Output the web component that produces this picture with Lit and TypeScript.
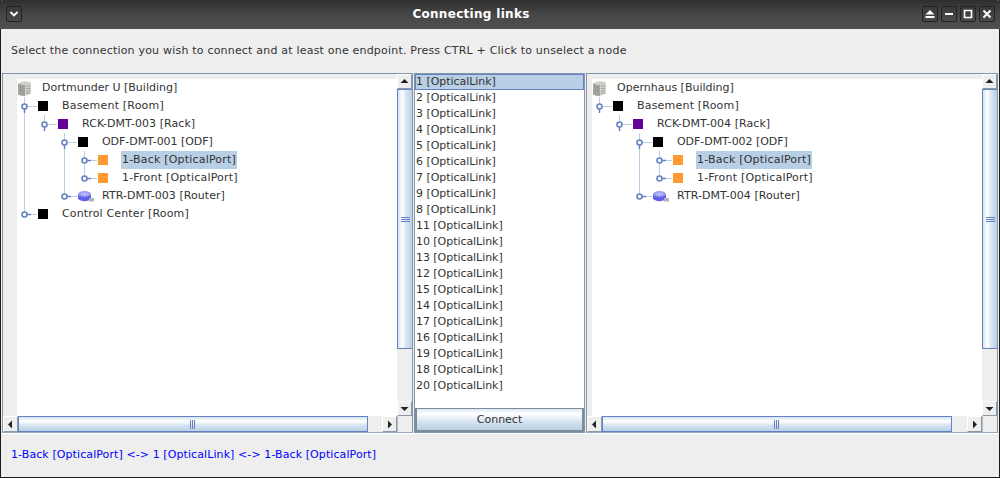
import { LitElement, html, css, svg } from 'lit';
import { customElement, property } from 'lit/decorators.js';

type Kind = 'building' | 'black' | 'rack' | 'port' | 'router';
interface TreeRow {
  label: string;
  kind: Kind;
  depth: number;
  guides: number[]; // columns with a line running the full row
  ends: boolean; // handle's line stops here (last child)
  open?: boolean;
  selected?: boolean;
  track?: number; // the reference text has rounded advances, so widths differ a bit per label
}

const treeRows = (a: string, b: string, c: string, d: string, e: string, withControl: boolean): TreeRow[] => {
  const rows: TreeRow[] = [
    { label: a, kind: 'building', depth: 0, guides: [], ends: false },
    { label: 'Basement [Room]', kind: 'black', depth: 1, guides: [], ends: !withControl, open: true, track: 0.2 },
    { label: b, kind: 'rack', depth: 2, guides: withControl ? [0] : [], ends: true, open: true, track: 0.06 },
    { label: c, kind: 'black', depth: 3, guides: withControl ? [0] : [], ends: false, open: true, track: -0.05 },
    { label: '1-Back [OpticalPort]', kind: 'port', depth: 4, guides: withControl ? [0, 2] : [2], ends: false, selected: true, track: 0.2 },
    { label: '1-Front [OpticalPort]', kind: 'port', depth: 4, guides: withControl ? [0, 2] : [2], ends: true, track: 0.2 },
    { label: d, kind: 'router', depth: 3, guides: withControl ? [0] : [], ends: true, track: 0.05 },
  ];
  if (withControl) rows.push({ label: e, kind: 'black', depth: 1, guides: [], ends: true, track: 0.15 });
  return rows;
};

@customElement('scroll-bar')
export class ScrollBar extends LitElement {
  @property({ type: Boolean, reflect: true }) horizontal = false;
  @property({ type: Number }) size = 260;

  static styles = css`
    :host { display: flex; flex-direction: column; background: #eeeeee; min-width: 0; min-height: 0; }
    :host([horizontal]) { flex-direction: row; }
    .btn {
      flex: 0 0 15px;
      height: 15px;
      box-sizing: border-box;
      display: flex;
      align-items: center;
      justify-content: center;
      background: #eeeeee;
      border: 1px solid #a3b1bf;
      border-color: #ffffff #8a99a8 #8a99a8 #ffffff;
    }
    :host([horizontal]) .btn { height: auto; }
    .thumb {
      flex: none;
      box-sizing: border-box;
      display: flex;
      align-items: center;
      justify-content: center;
      background: linear-gradient(90deg, #d5e2ef 0%, #ffffff 30%, #dce7f2 55%, #b8cfe5 100%);
      border: 1px solid #6382bf;
      border-width: 1px 0 1px 1px;
    }
    :host([horizontal]) .thumb {
      background: linear-gradient(180deg, #d5e2ef 0%, #ffffff 30%, #dce7f2 55%, #b8cfe5 100%);
      border-width: 1px 1px 1px 1px;
    }
    svg { display: block; }
  `;

  private arrow(points: string) {
    return html`<svg width="9" height="9" viewBox="0 0 9 9"><polygon points=${points} fill="#222"></polygon></svg>`;
  }

  render() {
    const h = this.horizontal;
    const style = h ? `width:${this.size}px` : `height:${this.size}px`;
    const grip = h
      ? svg`<path d="M0 0v9M2 0v9M4 0v9" stroke="#6382bf" transform="translate(1.5 0)"/>`
      : svg`<path d="M0 .5h9M0 2.5h9M0 4.5h9" stroke="#6382bf" transform="translate(0 2)"/>`;
    return html`
      <div class="btn">${this.arrow(h ? '2,4.5 6,0.5 6,8.5' : '0.5,6 4.5,2 8.5,6')}</div>
      <div class="thumb" style=${style}><svg width="9" height="9">${grip}</svg></div>
      <div style="flex:1"></div>
      <div class="btn">${this.arrow(h ? '3,0.5 7,4.5 3,8.5' : '0.5,3 4.5,7 8.5,3')}</div>
    `;
  }
}

@customElement('tree-view')
export class TreeView extends LitElement {
  @property({ attribute: false }) rows: TreeRow[] = [];

  static styles = css`
    :host { display: block; background: #ffffff; height: 100%; overflow: hidden; }
    .row { display: flex; align-items: center; height: 18px; white-space: nowrap; }
    .lines { flex: none; display: block; }
    .sq { flex: none; width: 10px; height: 10px; margin-left: 1px; margin-right: 14px; }
    .black { background: #000000; }
    .rack { background: #660099; }
    .port { background: #ff9933; }
    .glyph { flex: none; display: block; margin-left: 1px; }
    .glyph.root { margin-right: 11px; }
    .glyph.router { margin-right: 8px; }
    .label { padding: 0 1px; margin-left: -1px; line-height: 18px; }
    .selected { background: #b8cfe5; }
  `;

  private lines(r: TreeRow) {
    const x = (r.depth - 1) * 20 + 7;
    const guides = r.guides.map((g) => svg`<path d="M${g * 20 + 7.5} 0v18" stroke="#b8cfe5"/>`);
    const stem = r.open
      ? svg`<path d="M${x + 0.5} 11v5" stroke="#6382bf" stroke-width="1.500"/>`
      : svg`<path d="M${x + 3} 9.500h4" stroke="#6382bf" stroke-width="1.500"/>`;
    return html`<svg class="lines" width=${r.depth * 20} height="18">
      ${guides}
      <path d="M${x + 0.5} 0V${r.ends ? 9 : 18}M${x + 4} 9.500h9" stroke="#b8cfe5"/>
      ${stem}
      <circle cx=${x + 0.5} cy="9.500" r="2.500" fill="#ffffff" stroke="#6382bf" stroke-width="1.600"/>
    </svg>`;
  }

  private icon(kind: Kind) {
    if (kind === 'building') {
      return html`<svg class="glyph root" width="13" height="15" viewBox="0 0 13 15">
        <path d="M0 2.500Q6.500 -1.500 13 1.500V12.500Q6.500 16.500 0 13.500Z" fill="#cfcfcb"/>
        <path d="M0 2.500Q3.500 4.500 7 3.700V15Q3.500 15 0 13.500Z" fill="#a2a2a0"/>
        <path d="M8.500 5h3M8.500 7.500h3M8.500 10h3M8.500 12h3" stroke="#847c58" stroke-dasharray="1 1"/>
        <path d="M2 6h3M2 8.500h3M2 11h3" stroke="#8a8a86" stroke-dasharray="1 1"/>
      </svg>`;
    }
    if (kind === 'router') {
      return html`<svg class="glyph router" width="16" height="11" viewBox="0 0 16 11">
        <path d="M0 3V8Q6.500 12.500 13 8V3Z" fill="#5f5fee"/>
        <ellipse cx="6.500" cy="3" rx="6.500" ry="3" fill="#9c9cf6"/>
        <path d="M3 3h7M6.500 1v4" stroke="#c8c8fa"/>
        <rect x="11" y="7" width="5" height="3.500" fill="#b4b4b4"/>
      </svg>`;
    }
    return html`<div class="sq ${kind}"></div>`;
  }

  render() {
    return this.rows.map(
      (r) => html`<div class="row">
        ${r.depth > 0 ? this.lines(r) : ''}${this.icon(r.kind)}
        <span class="label ${r.selected ? 'selected' : ''}" style="letter-spacing:${r.track ?? 0}px">${r.label}</span>
      </div>`
    );
  }
}

@customElement('tree-pane')
export class TreePane extends LitElement {
  @property({ attribute: false }) rows: TreeRow[] = [];
  @property({ type: Number }) gutter = 14;
  @property({ type: Number }) thumbH = 350;

  static styles = css`
    :host {
      display: grid;
      grid-template-columns: 1fr 15px;
      grid-template-rows: 1fr 16px;
      box-sizing: border-box;
      min-width: 0;
      min-height: 0;
      border: 1px solid #8496a8;
      border-bottom-color: #9aa9b8;
      background: #eeeeee;
    }
    .view { box-sizing: border-box; padding-top: 5px; min-height: 0; min-width: 0; overflow: hidden; }
    .corner { background: #eeeeee; border-left: 1px solid #b0bcc8; }
  `;

  render() {
    return html`
      <div class="view" style="padding-left:${this.gutter}px"><tree-view .rows=${this.rows}></tree-view></div>
      <scroll-bar .size=${260}></scroll-bar>
      <scroll-bar horizontal .size=${this.thumbH}></scroll-bar>
      <div class="corner"></div>
    `;
  }
}

@customElement('app-root')
export class AppRoot extends LitElement {
  private links = [1, 2, 3, 4, 5, 6, 7, 9, 8, 11, 10, 13, 12, 15, 14, 17, 16, 19, 18, 20];
  private leftRows = treeRows('Dortmunder U [Building]', 'RCK-DMT-003 [Rack]', 'ODF-DMT-001 [ODF]', 'RTR-DMT-003 [Router]', 'Control Center [Room]', true);
  private rightRows = treeRows('Opernhaus [Building]', 'RCK-DMT-004 [Rack]', 'ODF-DMT-002 [ODF]', 'RTR-DMT-004 [Router]', '', false);

  static styles = css`
    :host {
      display: block;
      width: 1000px;
      height: 478px;
      font-family: 'DejaVu Sans', sans-serif;
      font-size: 11px;
      color: #333333;
      overflow: hidden;
    }
    .window {
      box-sizing: border-box;
      height: 478px;
      display: flex;
      flex-direction: column;
      background: #eeeeee;
      border: 1px solid #1c1c1c;
      border-width: 0 1px 1px 1px;
    }
    .title {
      flex: 0 0 28px;
      display: flex;
      align-items: center;
      padding: 0 5px 1px 6px;
      background: linear-gradient(180deg, #2e2e2e 0%, #474747 50%, #4f4f4f 100%);
      border-radius: 3px 3px 0 0;
      margin: 0 -1px;
    }
    .title h1 {
      flex: 1;
      margin: 0 0 0 16px;
      padding-right: 18px;
      text-align: center;
      color: #ffffff;
      font-size: 12px;
      font-weight: bold;
      letter-spacing: 0.3px;
    }
    .wbtns { display: flex; gap: 3px; }
    .wbtn {
      width: 16px;
      height: 16px;
      box-sizing: border-box;
      border: 1px solid #222222;
      border-radius: 2px;
      background: linear-gradient(180deg, #3a3a3a, #4a4a4a);
      display: flex;
      align-items: center;
      justify-content: center;
    }
    .wbtn svg { display: block; }
    .message {
      flex: 0 0 44px;
      display: flex;
      align-items: center;
      padding-left: 10px;
      box-sizing: border-box;
      padding-bottom: 1px;
      letter-spacing: 0.2px;
    }
    .panes {
      flex: 0 0 360px;
      display: grid;
      grid-template-columns: 411px 171px 412px;
      column-gap: 1px;
      padding-left: 1px;
      min-height: 0;
    }
    .middle {
      display: flex;
      flex-direction: column;
      min-height: 0;
      box-sizing: border-box;
      border: 1px solid #8496a8;
      background: #ffffff;
    }
    .list { flex: 1; min-height: 0; }
    .item { height: 16px; line-height: 16px; padding-left: 1px; box-sizing: border-box; white-space: nowrap; letter-spacing: -0.05px; }
    .item.on { background: #b8cfe5; border: 1px solid #6382bf; padding-left: 0; line-height: 14px; }
    .connect {
      flex: 0 0 24px;
      box-sizing: border-box;
      display: flex;
      align-items: center;
      justify-content: center;
      border: 2px solid #7d8c9b;
      border-width: 1px 2px 2px 2px;
      background: linear-gradient(180deg, #dce7f2 0%, #ffffff 22%, #dce7f2 55%, #b8cfe5 100%);
    }
    .status {
      flex: 1;
      display: flex;
      align-items: center;
      padding-left: 10px;
      color: #0000ff;
      border-top: 1px solid #ffffff;
      padding-bottom: 2px;
      letter-spacing: 0.09px;
    }
  `;

  render() {
    return html`
      <div class="window">
        <div class="title">
          <div class="wbtn">
            <svg width="10" height="10"><path d="M1.500 3L5 6.500L8.500 3" fill="none" stroke="#fff" stroke-width="1.800"/></svg>
          </div>
          <h1>Connecting links</h1>
          <div class="wbtns">
            <div class="wbtn"><svg width="10" height="10"><path d="M5 1L9.500 5.500H.5Z M.5 7h9v2h-9z" fill="#fff"/></svg></div>
            <div class="wbtn"><svg width="10" height="10"><path d="M1 5h8" stroke="#fff" stroke-width="2"/></svg></div>
            <div class="wbtn"><svg width="10" height="10"><path d="M1.500 1.500h7v7h-7z" fill="none" stroke="#fff" stroke-width="1.600"/></svg></div>
            <div class="wbtn"><svg width="10" height="10"><path d="M1.500 1.500L8.500 8.500M8.500 1.500L1.500 8.500" stroke="#fff" stroke-width="2"/></svg></div>
          </div>
        </div>
        <div class="message">Select the connection you wish to connect and at least one endpoint. Press CTRL + Click to unselect a node</div>
        <div class="panes">
          <tree-pane .rows=${this.leftRows} .gutter=${14} .thumbH=${350}></tree-pane>
          <div class="middle">
            <div class="list">
              ${this.links.map((n, i) => html`<div class="item ${i === 0 ? 'on' : ''}">${n} [OpticalLink]</div>`)}
            </div>
            <div class="connect">Connect</div>
          </div>
          <tree-pane .rows=${this.rightRows} .gutter=${5} .thumbH=${350}></tree-pane>
        </div>
        <div class="status">1-Back [OpticalPort] &lt;-&gt; 1 [OpticalLink] &lt;-&gt; 1-Back [OpticalPort]</div>
      </div>
    `;
  }
}
